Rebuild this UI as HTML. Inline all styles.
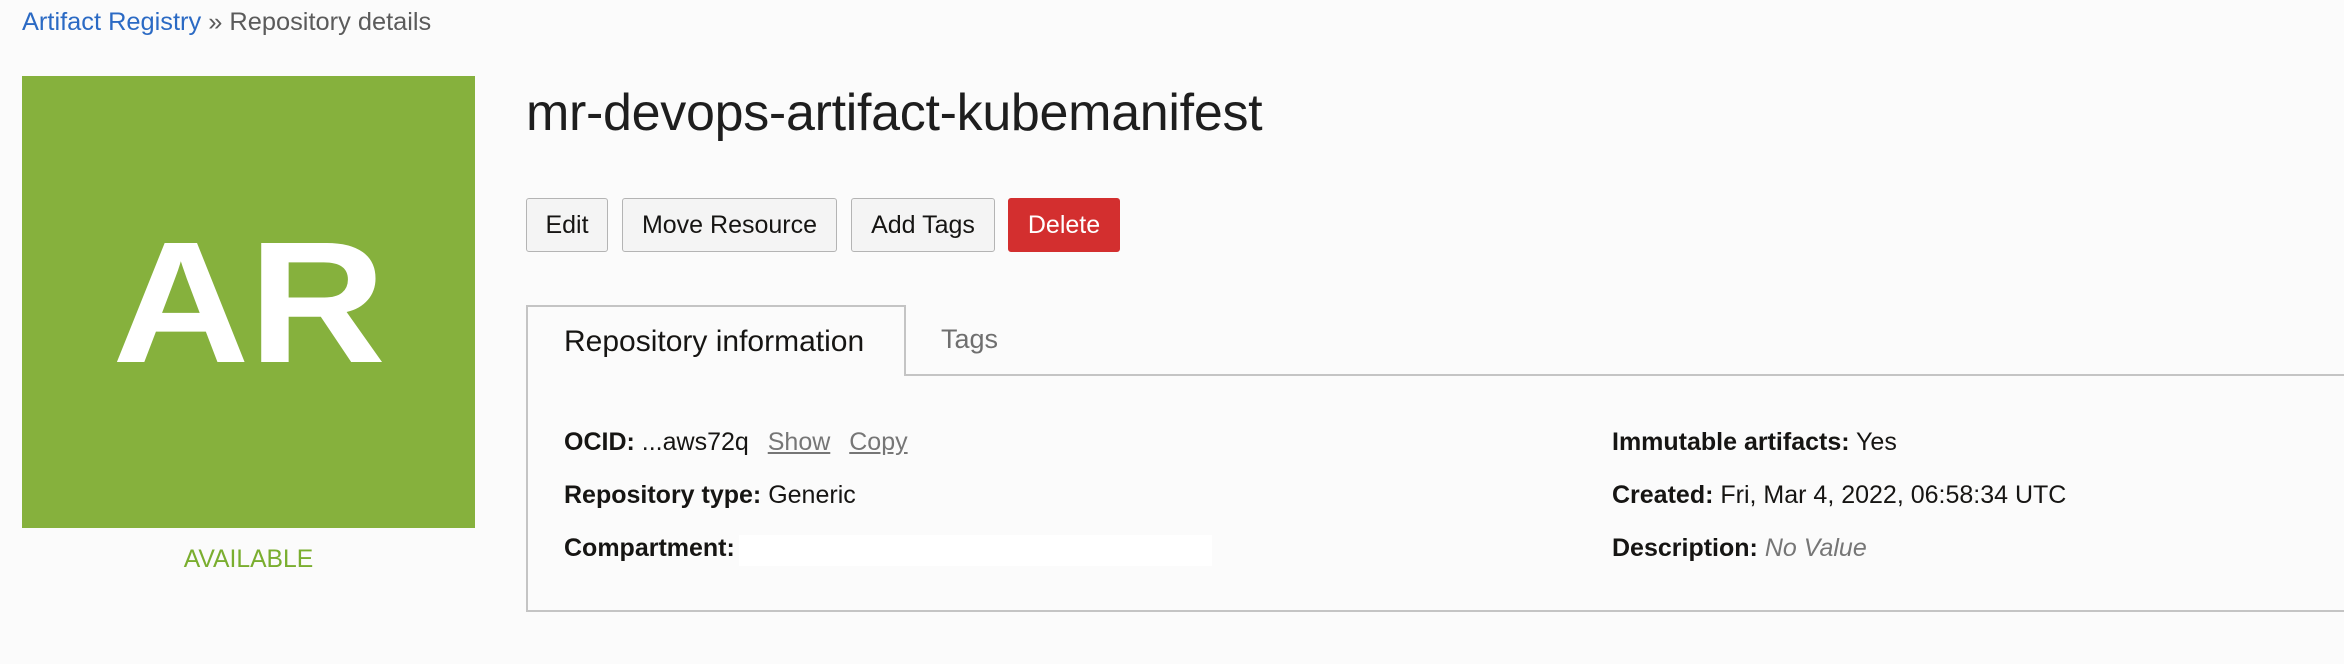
<!DOCTYPE html>
<html><head><meta charset="utf-8"><style>
body{margin:0;width:2344px;height:664px;background:#fbfbfb;font-family:"Liberation Sans",Arial,sans-serif;position:relative;overflow:hidden;color:#161513}
.a{position:absolute;white-space:nowrap}
.bc{left:22px;top:8px;font-size:25.4px;color:#5b5b5b}
.bc span{color:#2b6ac4}
.box{left:22px;top:76px;width:453px;height:452px;background:#86b13d}
.ar{left:22px;width:453px;top:216px;text-align:center;font-size:173px;font-weight:bold;color:#fff;line-height:1;letter-spacing:-1px;transform:scaleX(1.1);transform-origin:center}
.av{left:22px;width:453px;top:546px;text-align:center;font-size:24.7px;color:#7aae2f}
.title{left:526px;top:83px;font-size:52px;color:#1e1e1e;letter-spacing:-0.3px}
.btn{top:198px;height:52px;border:1px solid #b4b4b4;border-radius:3px;background:#f4f4f4;font-size:25px;line-height:52px;text-align:center;color:#161513;box-sizing:content-box}
.del{background:#d32f2f;border-color:#d32f2f;color:#fff}
.panel{left:526px;top:306px;width:1830px;height:304px;border:2px solid #c4c4c4;border-right:none;border-top:none;background:#fbfbfb}
.tabline{left:904px;top:374px;width:1440px;height:2px;background:#c4c4c4}
.tabtop{left:526px;top:305px;width:380px;height:2px;background:#c4c4c4}
.tabside{left:904px;top:305px;width:2px;height:71px;background:#c4c4c4}
.t1{left:564px;top:325px;font-size:30px;color:#161513}
.t2{left:941px;top:324px;font-size:27px;color:#6f6f6f}
.row{font-size:25px;color:#161513}
.row b{font-weight:bold}
.u{color:#767676;text-decoration:underline;margin-left:12px}
</style></head><body>
<div class="a bc"><span>Artifact Registry</span> » Repository details</div>
<div class="a box"></div>
<div class="a ar">AR</div>
<div class="a av">AVAILABLE</div>
<div class="a title">mr-devops-artifact-kubemanifest</div>
<div class="a btn" style="left:526px;width:80px">Edit</div>
<div class="a btn" style="left:622px;width:213px">Move Resource</div>
<div class="a btn" style="left:851px;width:142px">Add Tags</div>
<div class="a btn del" style="left:1008px;width:110px">Delete</div>
<div class="a panel"></div>
<div class="a tabtop"></div>
<div class="a tabside"></div>
<div class="a tabline"></div>
<div class="a t1">Repository information</div>
<div class="a t2">Tags</div>
<div class="a row" style="left:564px;top:428px"><b>OCID:</b> ...aws72q <span class="u">Show</span> <span class="u">Copy</span></div>
<div class="a row" style="left:564px;top:481px"><b>Repository type:</b> Generic</div>
<div class="a row" style="left:564px;top:534px"><b>Compartment:</b></div>
<div class="a" style="left:739px;top:535px;width:473px;height:31px;background:#fff"></div>
<div class="a row" style="left:1612px;top:428px"><b>Immutable artifacts:</b> Yes</div>
<div class="a row" style="left:1612px;top:481px"><b>Created:</b> Fri, Mar 4, 2022, 06:58:34 UTC</div>
<div class="a row" style="left:1612px;top:534px"><b>Description:</b> <i style="color:#767676">No Value</i></div>
</body></html>
